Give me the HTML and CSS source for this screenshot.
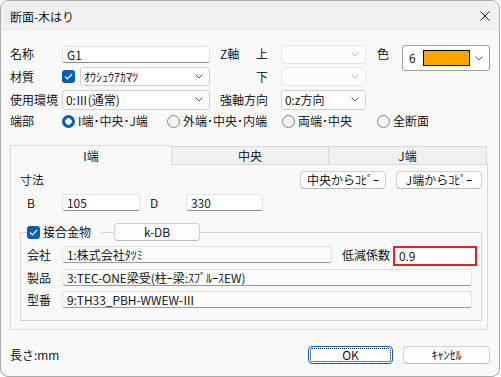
FILE: index.html
```html
<!DOCTYPE html>
<html lang="ja">
<head>
<meta charset="utf-8">
<link rel="stylesheet" href="styles.css">
</head>
<body>
<div class="window">
  <div class="titlebar">
    <span class="title">断面-木はり</span>
    <svg class="close" width="10" height="10" viewBox="0 0 10 10"><path d="M0.5 0.5L9.5 9.5M9.5 0.5L0.5 9.5" stroke="#1a1a1a" stroke-width="1" fill="none"/></svg>
  </div>
  <div class="content">
    <div class="top">
      <span class="lbl c1 r1">名称</span>
      <div class="field c2 r1 name-field">G1</div>
      <span class="lbl c4 r1">Z軸</span>
      <span class="lbl c5 r1 ud">上</span>
      <div class="combo disabled c6 r1"><span></span><svg class="chev" width="8" height="5" viewBox="0 0 8 5"><path d="M0.5 0.5L4 4L7.5 0.5" fill="none" stroke="#c2c2c2"/></svg></div>
      <span class="lbl c8 r1">色</span>
      <div class="color-combo">
        <span class="cnum">6</span><span class="swatch"></span>
        <svg class="chev" width="8" height="5" viewBox="0 0 8 5"><path d="M0.5 0.5L4 4L7.5 0.5" fill="none" stroke="#555"/></svg>
      </div>

      <span class="lbl c1 r2">材質</span>
      <div class="mat c2 r2">
        <span class="cb"><svg width="9" height="7" viewBox="0 0 9 7"><path d="M1 3.5L3.5 6L8 1" fill="none" stroke="#fff" stroke-width="1.2"/></svg></span>
        <div class="combo mat-combo"><span class="val">ｵｳｼｭｳｱｶﾏﾂ</span><svg class="chev" width="8" height="5" viewBox="0 0 8 5"><path d="M0.5 0.5L4 4L7.5 0.5" fill="none" stroke="#555"/></svg></div>
      </div>
      <span class="lbl c5 r2 ud">下</span>
      <div class="combo disabled c6 r2"><span></span><svg class="chev" width="8" height="5" viewBox="0 0 8 5"><path d="M0.5 0.5L4 4L7.5 0.5" fill="none" stroke="#c2c2c2"/></svg></div>

      <span class="lbl c1 r3">使用環境</span>
      <div class="combo c2 r3"><span class="val">0:Ⅲ(通常)</span><svg class="chev" width="8" height="5" viewBox="0 0 8 5"><path d="M0.5 0.5L4 4L7.5 0.5" fill="none" stroke="#555"/></svg></div>
      <span class="lbl c45 r3">強軸方向</span>
      <div class="combo c6 r3"><span class="val">0:z方向</span><svg class="chev" width="8" height="5" viewBox="0 0 8 5"><path d="M0.5 0.5L4 4L7.5 0.5" fill="none" stroke="#555"/></svg></div>

      <span class="lbl c1 r4">端部</span>
      <div class="radios r4">
        <label class="radio w1"><span class="rb on"></span>I端･中央･J端</label>
        <label class="radio w2"><span class="rb"></span>外端･中央･内端</label>
        <label class="radio w3"><span class="rb"></span>両端･中央</label>
        <label class="radio"><span class="rb"></span>全断面</label>
      </div>
    </div>

    <div class="tabs">
      <div class="tab active">I端</div>
      <div class="tab t2">中央</div>
      <div class="tab t3">J端</div>
    </div>
    <div class="pane">
      <div class="pane-head">
        <span class="lbl">寸法</span>
        <div class="head-btns">
          <button class="btn">中央からｺﾋﾟｰ</button>
          <button class="btn">J端からｺﾋﾟｰ</button>
        </div>
      </div>
      <div class="dims">
        <span class="lbl dlbl">B</span>
        <div class="field w-b">105</div>
        <span class="lbl dlbl2">D</span>
        <div class="field w-d">330</div>
      </div>
      <fieldset class="group">
        <legend class="legend">
          <span class="cb"><svg width="9" height="7" viewBox="0 0 9 7"><path d="M1 3.5L3.5 6L8 1" fill="none" stroke="#fff" stroke-width="1.2"/></svg></span>
          <span class="lbl leg-lbl">接合金物</span>
          <span class="leg-line"></span>
          <button class="btn kdb">k-DB</button>
        </legend>
        <div class="frow first">
          <span class="lbl flbl">会社</span>
          <div class="field ro w-co">1:株式会社ﾀﾂﾐ</div>
          <span class="lbl red-lbl">低減係数</span>
          <div class="field red">0.9</div>
        </div>
        <div class="frow second">
          <span class="lbl flbl">製品</span>
          <div class="field ro w-full">3:TEC-ONE梁受(柱ｰ梁:ｽﾌﾟﾙｰｽEW)</div>
        </div>
        <div class="frow third">
          <span class="lbl flbl">型番</span>
          <div class="field ro w-full">9:TH33_PBH-WWEW-Ⅲ</div>
        </div>
      </fieldset>
    </div>

    <div class="foot">
      <span class="lbl">長さ:mm</span>
      <div class="foot-btns">
        <button class="btn ok">OK</button>
        <button class="btn cancel">ｷｬﾝｾﾙ</button>
      </div>
    </div>
  </div>
</div>
</body>
</html>
```

FILE: styles.css
```css
* { box-sizing: border-box; }
html, body { margin: 0; padding: 0; background: #ffffff; }
body {
  font-family: "Noto Sans CJK JP", "Noto Sans", sans-serif;
  font-size: 12px;
  font-weight: 350;
  color: #000;
}
.window {
  width: 500px;
  height: 377px;
  border: 1px solid #ababab;
  border-radius: 8px;
  background: #f9f9f9;
  overflow: hidden;
  display: flex;
  flex-direction: column;
}
.titlebar {
  height: 30px;
  flex: none;
  background: #f0f0f0;
  display: flex;
  align-items: center;
  justify-content: space-between;
  padding: 0 9px 0 9px;
}
.title { line-height: 16px; padding-top: 1px; }
.content { padding: 12px 9px 0 9px; }

.lbl { line-height: 16px; white-space: nowrap; }

/* top grid */
.top {
  display: grid;
  grid-template-columns: 52px 148px 10px 36px 25px 85px 11px 25px 88px;
  grid-template-rows: 22px 23px 23px 20px;
  align-items: center;
}
.c1 { grid-column: 1; }
.c2 { grid-column: 2; }
.c4 { grid-column: 4; }
.c5 { grid-column: 5; }
.c45 { grid-column: 4 / 6; }
.c6 { grid-column: 6; }
.c8 { grid-column: 8; }
.r1 { grid-row: 1; }
.r2 { grid-row: 2; }
.r3 { grid-row: 3; }
.r4 { grid-row: 4; }
.ud { justify-self: end; margin-right: 13px; }

.field {
  height: 17px;
  background: #fff;
  border: 1px solid #e3e3e3;
  border-bottom-color: #8a8a8a;
  border-radius: 3px;
  padding: 0 4px;
  line-height: 15px;
  white-space: nowrap;
  overflow: hidden;
}
.field.ro { background: #fbfbfb; border-color: #e3e3e3; border-bottom-color: #999; }

.combo {
  height: 20px;
  background: #fff;
  border: 1px solid #d0d0d0;
  border-radius: 3px;
  display: flex;
  align-items: center;
  justify-content: space-between;
  padding: 0 6px 0 3px;
}
.combo.disabled { background: #fbfbfb; border-color: #e6e6e6; height: 19px; }
.val { line-height: 16px; white-space: nowrap; }
.chev { flex: none; }

.color-combo {
  grid-column: 9;
  grid-row: 1 / 3;
  align-self: start;
  margin-top: 2px;
  height: 26px;
  background: #fff;
  border: 1px solid #a0a0a0;
  border-radius: 3px;
  display: flex;
  align-items: center;
  padding: 0 6px 0 6px;
}
.cnum { line-height: 16px; }
.swatch {
  width: 47px;
  height: 16px;
  background: #ffa500;
  border: 1px solid #000;
  margin-left: 7px;
}
.color-combo .chev { margin-left: auto; }

.mat { display: flex; align-items: center; }
.mat-combo { margin-left: 5px; flex: 1; height: 19px; }

.cb {
  width: 13px;
  height: 13px;
  flex: none;
  border-radius: 3px;
  background: #005fb8;
  display: inline-flex;
  align-items: center;
  justify-content: center;
}

.radios { grid-column: 2 / -1; display: flex; align-items: center; }
.radio { display: flex; align-items: center; line-height: 16px; white-space: nowrap; }
.w1 { width: 105px; }
.w2 { width: 115px; }
.w3 { width: 95px; }
.rb {
  width: 13px;
  height: 13px;
  border-radius: 50%;
  border: 1px solid #868686;
  background: #f4f4f4;
  margin-right: 3px;
  flex: none;
}
.rb.on {
  border: none;
  background: radial-gradient(circle, #ffffff 0 3px, #005fb8 3.6px);
}

/* tabs */
.tabs {
  display: flex;
  align-items: flex-end;
  height: 19px;
  margin-top: 14px;
  position: relative;
  z-index: 1;
}
.tab {
  height: 18px;
  background: #f0f0f0;
  border: 1px solid #dadada;
  border-bottom: none;
  text-align: center;
  line-height: 17px;
}
.tab.active {
  width: 162px;
  height: 20px;
  margin-bottom: -1px;
  background: #f9f9f9;
  line-height: 19px;
}
.t2 { width: 157px; border-left: none; }
.t3 { width: 158px; border-left: none; }

.pane {
  width: 478px;
  height: 166px;
  border: 1px solid #dadada;
  background: #f9f9f9;
  padding: 6px 5px 0 9px;
}
.pane-head { display: flex; align-items: center; height: 18px; }
.head-btns { margin-left: auto; display: flex; gap: 10px; }

.btn {
  height: 18px;
  width: 86px;
  padding: 0;
  font: inherit;
  font-size: 12px;
  line-height: 16px;
  color: #000;
  background: #fdfdfd;
  border: 1px solid #d0d0d0;
  border-bottom-color: #b9b9b9;
  border-radius: 4px;
  white-space: nowrap;
}

.dims { display: flex; align-items: center; margin-top: 5px; height: 17px; }
.dlbl { width: 35px; margin-left: 7px; }
.w-b { width: 78px; }
.dlbl2 { width: 36px; margin-left: 10px; }
.w-d { width: 77px; }

.group {
  margin: 12px 0 0 0;
  width: 462px;
  padding: 5px 0 12px 6px;
  border: 1px solid #d6d6d6;
  min-width: 0;
}
.legend { padding: 0; display: flex; align-items: center; height: 18px; }
.leg-lbl { margin-left: 3px; }
.leg-line { width: 13px; margin-left: 10px; border-top: 1px solid #d6d6d6; }
.kdb { width: 86px; }

.frow { display: flex; align-items: flex-start; }
.second { margin-top: 3px; }
.third { margin-top: 5px; }
.flbl { width: 35px; line-height: 17px; }
.w-co { width: 270px; }
.red-lbl { margin-left: 10px; width: 51px; line-height: 17px; }
.field.red {
  width: 84px;
  height: 20px;
  border: 2px solid #e81d2a;
  border-radius: 0;
  padding: 0 4px;
  line-height: 16px;
}
.w-full { width: 410px; }

.foot { display: flex; align-items: center; margin-top: 16px; height: 18px; }
.foot-btns { margin-left: auto; display: flex; gap: 10px; }
.ok {
  width: 85px;
  border: 1px solid #0067c0;
  outline: 1px dotted #000;
  outline-offset: -3px;
}
.cancel { width: 87px; }
```
